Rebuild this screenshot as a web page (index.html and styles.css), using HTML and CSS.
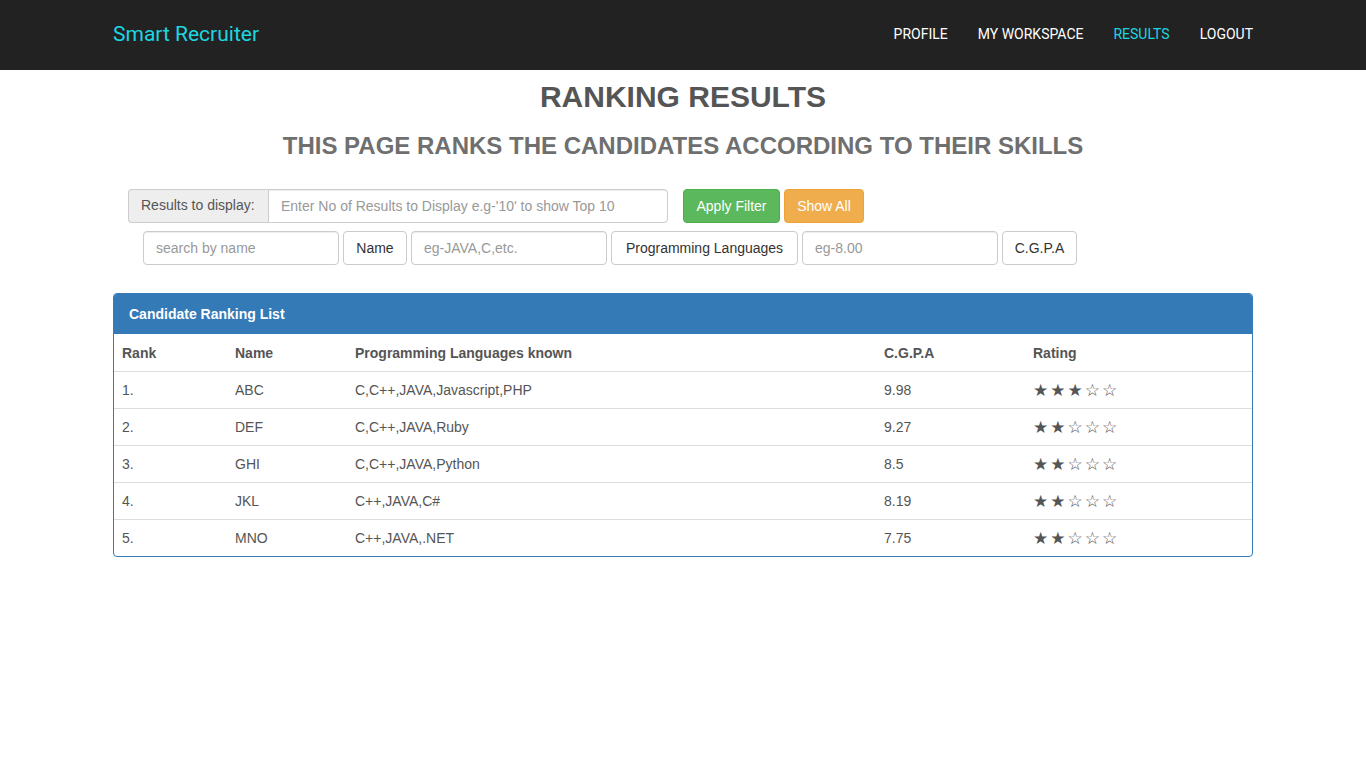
FILE: index.html
```html
<!DOCTYPE html>
<html>
<head>
<meta charset="utf-8">
<title>Smart Recruiter - Results</title>
<link rel="stylesheet" href="styles.css">
</head>
<body>
<nav class="navbar">
  <div class="container nav-inner">
    <a class="brand" href="#">Smart Recruiter</a>
    <ul class="nav-links">
      <li><a href="#">PROFILE</a></li>
      <li><a href="#">MY WORKSPACE</a></li>
      <li><a href="#" class="active">RESULTS</a></li>
      <li><a href="#">LOGOUT</a></li>
    </ul>
  </div>
</nav>
<main class="container">
  <h1 class="title">RANKING RESULTS</h1>
  <h2 class="subtitle">THIS PAGE RANKS THE CANDIDATES ACCORDING TO THEIR SKILLS</h2>

  <div class="filter-row first">
    <div class="input-group">
      <span class="addon">Results to display:</span>
      <input class="control grouped" type="text" placeholder="Enter No of Results to Display e.g-'10' to show Top 10">
    </div>
    <button class="btn btn-success w-apply">Apply Filter</button>
    <button class="btn btn-warning w-show">Show All</button>
  </div>

  <div class="filter-row second">
    <input class="control w196" type="text" placeholder="search by name">
    <button class="btn btn-default w-name">Name</button>
    <input class="control w196" type="text" placeholder="eg-JAVA,C,etc.">
    <button class="btn btn-default w-lang">Programming Languages</button>
    <input class="control w196" type="text" placeholder="eg-8.00">
    <button class="btn btn-default w-cgpa">C.G.P.A</button>
  </div>

  <div class="panel">
    <div class="panel-heading">Candidate Ranking List</div>
    <table class="table">
      <colgroup>
        <col class="c-rank"><col class="c-name"><col class="c-lang"><col class="c-cgpa"><col class="c-rate">
      </colgroup>
      <thead>
        <tr><th>Rank</th><th>Name</th><th>Programming Languages known</th><th>C.G.P.A</th><th>Rating</th></tr>
      </thead>
      <tbody>
        <tr><td>1.</td><td>ABC</td><td>C,C++,JAVA,Javascript,PHP</td><td>9.98</td><td class="stars">★★★☆☆</td></tr>
        <tr><td>2.</td><td>DEF</td><td>C,C++,JAVA,Ruby</td><td>9.27</td><td class="stars">★★☆☆☆</td></tr>
        <tr><td>3.</td><td>GHI</td><td>C,C++,JAVA,Python</td><td>8.5</td><td class="stars">★★☆☆☆</td></tr>
        <tr><td>4.</td><td>JKL</td><td>C++,JAVA,C#</td><td>8.19</td><td class="stars">★★☆☆☆</td></tr>
        <tr><td>5.</td><td>MNO</td><td>C++,JAVA,.NET</td><td>7.75</td><td class="stars">★★☆☆☆</td></tr>
      </tbody>
    </table>
  </div>
</main>
</body>
</html>
```
FILE: styles.css
```css
* { box-sizing: border-box; }
html, body { margin: 0; padding: 0; }
body {
  font-family: "Liberation Sans", Arial, sans-serif;
  font-size: 14px;
  line-height: 1.42857;
  color: #333;
  background: #fff;
}
.container {
  width: 1170px;
  margin: 0 auto;
  padding: 0 15px;
}
.navbar {
  background: #222;
  height: 70px;
}
.nav-inner {
  display: flex;
  align-items: center;
  justify-content: space-between;
  height: 70px;
}
.brand {
  font-family: Roboto, sans-serif;
  font-size: 21px;
  color: #1ed6e0;
  text-decoration: none;
}
.nav-links {
  list-style: none;
  display: flex;
  margin: 0;
  padding: 0 0 2px;
}
.nav-links a {
  display: block;
  font-family: Roboto, sans-serif;
  font-size: 14px;
  color: #fff;
  text-decoration: none;
  padding: 0 15px;
  line-height: 20px;
}
.nav-links li:last-child a { padding-right: 0; }
.nav-links a.active { color: #1ed6e0; }

.title {
  text-align: center;
  font-size: 30px;
  font-weight: bold;
  color: #555;
  margin: 10px 0 0;
  line-height: 1.1;
}
.subtitle {
  text-align: center;
  font-size: 24px;
  font-weight: bold;
  color: #6f6f6f;
  margin: 20px 0 0;
  line-height: 1.1;
}
.filter-row {
  display: flex;
  align-items: center;
}
.filter-row.first {
  margin-top: 30px;
  padding-left: 15px;
}
.filter-row.second {
  margin-top: 8px;
  padding-left: 30px;
  gap: 4px;
}
.input-group {
  display: flex;
  width: 540px;
  margin-right: 15px;
}
.addon {
  display: flex;
  align-items: center;
  background: #eee;
  border: 1px solid #ccc;
  border-right: 0;
  border-radius: 4px 0 0 4px;
  padding: 6px 12px;
  color: #555;
  height: 34px;
  width: 140px;
  white-space: nowrap;
}
.control {
  height: 34px;
  padding: 6px 12px;
  font-family: "Liberation Sans", Arial, sans-serif;
  font-size: 14px;
  color: #555;
  border: 1px solid #ccc;
  border-radius: 4px;
  background: #fff;
  box-shadow: inset 0 1px 1px rgba(0,0,0,.075);
  outline: none;
}
.control::placeholder { color: #999; }
.control.grouped {
  flex: 1;
  border-radius: 0 4px 4px 0;
}
.w196 { width: 196px; }
.btn {
  height: 34px;
  padding: 6px 0;
  font-family: "Liberation Sans", Arial, sans-serif;
  font-size: 14px;
  border: 1px solid transparent;
  border-radius: 4px;
  cursor: pointer;
  white-space: nowrap;
  text-align: center;
}
.w-apply { width: 97px; }
.w-show { width: 80px; }
.w-name { width: 64px; }
.w-lang { width: 187px; }
.w-cgpa { width: 75px; }
.btn-success {
  background: #5cb85c;
  border-color: #4cae4c;
  color: #fff;
}
.btn-warning {
  background: #f0ad4e;
  border-color: #eea236;
  color: #fff;
  margin-left: 4px;
}
.btn-default {
  background: #fff;
  border-color: #ccc;
  color: #333;
}
.panel {
  margin-top: 28px;
  border: 1px solid #337ab7;
  border-radius: 4px;
  overflow: hidden;
}
.panel-heading {
  background: #337ab7;
  color: #fff;
  font-weight: bold;
  padding: 10px 15px;
  height: 40px;
  line-height: 20px;
}
.table {
  width: 100%;
  border-collapse: collapse;
  table-layout: fixed;
}
.c-rank { width: 113px; }
.c-name { width: 120px; }
.c-lang { width: 529px; }
.c-cgpa { width: 149px; }
.table th, .table td {
  padding: 8px;
  line-height: 20px;
  text-align: left;
  color: #555;
}
.table th {
  font-weight: bold;
  border-bottom: 1px solid #ddd;
  height: 37px;
}
.table td {
  border-top: 1px solid #ddd;
  height: 36px;
}
.table tbody tr:first-child td { border-top: 0; height: 37px; }
.table td.stars {
  font-family: "DejaVu Sans", sans-serif;
  font-size: 17px;
  letter-spacing: 2px;
  color: #555;
}
```
